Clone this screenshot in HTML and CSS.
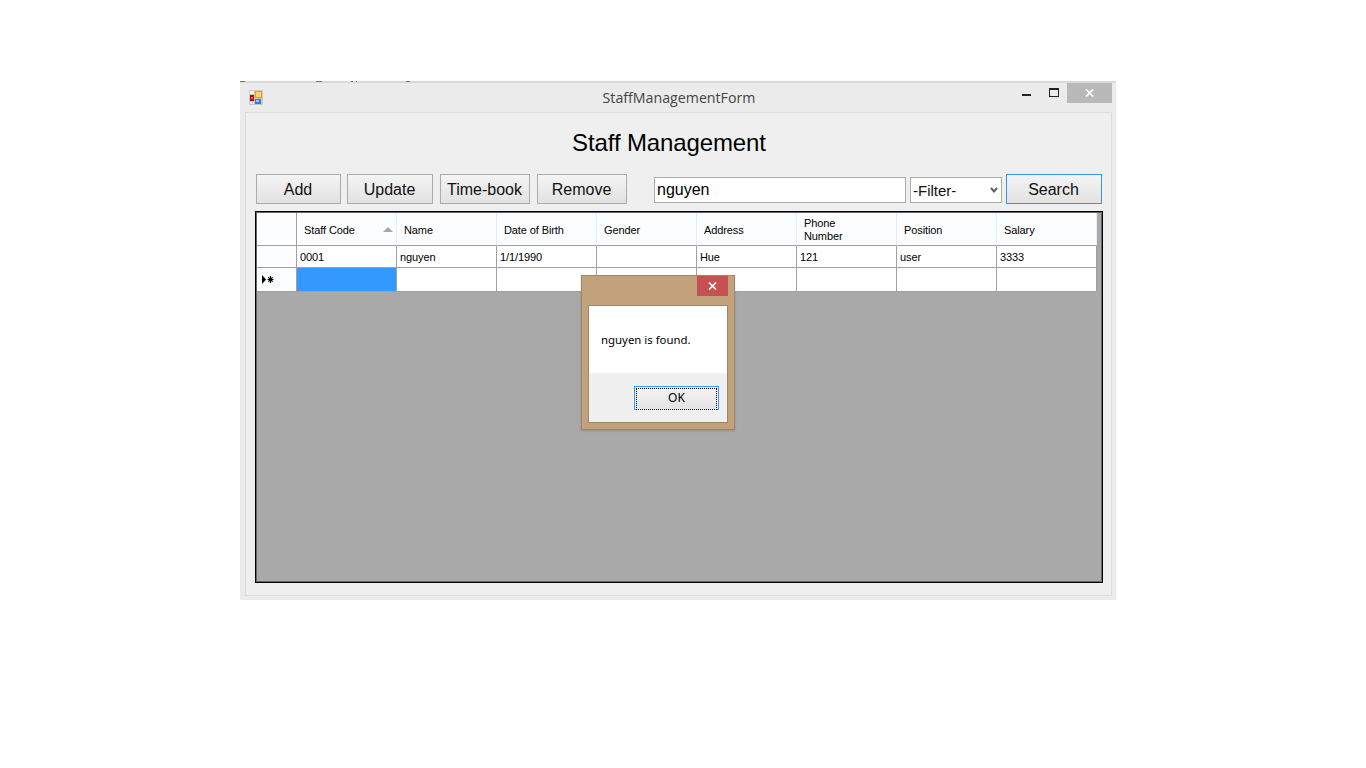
FILE: index.html
```html
<!DOCTYPE html>
<html lang="en">
<head>
  <meta charset="UTF-8">
  <title>StaffManagementForm</title>
  <link rel="stylesheet" href="styles.css">
</head>
<body>
<div class="window">
  <div class="smudges"><i class="s1"></i><i class="s2"></i><i class="s3"></i><i class="s4"></i><i class="s5"></i></div>
  <div class="titlebar">
    <svg class="app-icon" width="14" height="15" viewBox="0 0 14 15">
      <rect x="0" y="0" width="14" height="15" fill="#c9c9c9"/>
      <rect x="1" y="1" width="4" height="3" fill="#f2f2f2"/>
      <rect x="6" y="1" width="7" height="7" fill="#e0a800"/>
      <rect x="7" y="2" width="5" height="5" fill="#ffd75a"/>
      <rect x="1" y="5" width="4" height="6" fill="#b01010"/>
      <rect x="2" y="7" width="2" height="2" fill="#f06060"/>
      <rect x="6" y="9" width="6" height="5" fill="#3c78d8"/>
      <rect x="7" y="10" width="3" height="2" fill="#9cc4f4"/>
      <rect x="1" y="12" width="2" height="2" fill="#f2f2f2"/>
      <rect x="4" y="12" width="1" height="2" fill="#f2f2f2"/>
    </svg>
    <div class="window-title">StaffManagementForm</div>
    <div class="controls">
      <svg class="min-icon" width="9" height="3" viewBox="0 0 9 3"><rect width="9" height="2" y="1" fill="#222"/></svg>
      <svg class="max-icon" width="11" height="9" viewBox="0 0 11 9"><rect x="0.5" y="0.5" width="9" height="8" fill="none" stroke="#222"/><rect x="0" y="0" width="10" height="2" fill="#222"/></svg>
      <div class="close-btn">
        <svg width="9" height="8" viewBox="0 0 9 8"><path d="M1 0.5 L8 7.5 M8 0.5 L1 7.5" stroke="#fff" stroke-width="1.7"/></svg>
      </div>
    </div>
  </div>

  <div class="client">
    <h1 class="heading">Staff Management</h1>

    <div class="toolbar">
      <button class="btn btn-add">Add</button>
      <button class="btn btn-update">Update</button>
      <button class="btn btn-timebook">Time-book</button>
      <button class="btn btn-remove">Remove</button>
      <input class="search-box" type="text" value="nguyen">
      <div class="filter-wrap">
        <select class="filter"><option>-Filter-</option></select>
        <svg class="filter-arrow" width="8" height="6" viewBox="0 0 8 6"><path d="M1 1 L4 4.5 L7 1" fill="none" stroke="#606060" stroke-width="2"/></svg>
      </div>
      <button class="btn btn-search">Search</button>
    </div>

    <div class="grid-view">
      <div class="grid-rows">
        <div class="row head">
          <div class="cell rowhead"></div>
          <div class="cell sorted">Staff Code<span class="sort-arrow"></span></div>
          <div class="cell">Name</div>
          <div class="cell">Date of Birth</div>
          <div class="cell">Gender</div>
          <div class="cell">Address</div>
          <div class="cell">Phone<br>Number</div>
          <div class="cell">Position</div>
          <div class="cell">Salary</div>
        </div>
        <div class="row data">
          <div class="cell rowhead"></div>
          <div class="cell">0001</div>
          <div class="cell">nguyen</div>
          <div class="cell">1/1/1990</div>
          <div class="cell"></div>
          <div class="cell">Hue</div>
          <div class="cell">121</div>
          <div class="cell">user</div>
          <div class="cell">3333</div>
        </div>
        <div class="row data new-row">
          <div class="cell rowhead">
            <svg width="13" height="9" viewBox="0 0 13 9">
              <path d="M0 0 L4 4.5 L0 9 Z" fill="#000"/>
              <path d="M8.5 1 V8 M5.5 4.5 H11.5 M6.3 2.3 L10.7 6.7 M10.7 2.3 L6.3 6.7" stroke="#000" stroke-width="1.2"/>
            </svg>
          </div>
          <div class="cell selected"></div>
          <div class="cell"></div>
          <div class="cell"></div>
          <div class="cell"></div>
          <div class="cell"></div>
          <div class="cell"></div>
          <div class="cell"></div>
          <div class="cell"></div>
        </div>
      </div>
    </div>
  </div>

  <div class="dialog">
    <div class="dialog-top">
      <div class="dialog-close">
        <svg width="9" height="8" viewBox="0 0 9 8"><path d="M1 0.5 L8 7.5 M8 0.5 L1 7.5" stroke="#fff" stroke-width="1.7"/></svg>
      </div>
    </div>
    <div class="dialog-body">
      <div class="dialog-msg">nguyen is found.</div>
      <div class="dialog-foot">
        <button class="ok-btn"><span>OK</span></button>
      </div>
    </div>
  </div>
</div>
</body>
</html>
```

FILE: styles.css
```css
body {
  margin: 0;
  padding: 81px 0 0 240px;
  background-color: #fff;
  font-family: "Liberation Sans", Arial, sans-serif;
}

.window {
  position: relative;
  box-sizing: border-box;
  width: 876px;
  height: 519px;
  padding: 0 4px 4px 5px;
  background-color: #ebebeb;
  border-top: 2px solid #d9d9de;
}

.smudges i {
  position: absolute;
  top: -2px;
  height: 1px;
  background-color: #777;
}
.smudges .s1 { left: 0; width: 5px; }
.smudges .s2 { left: 76px; width: 6px; }
.smudges .s3 { left: 111px; width: 2px; }
.smudges .s4 { left: 116px; width: 1px; }
.smudges .s5 { left: 166px; width: 4px; }

.titlebar {
  display: grid;
  grid-template-columns: 1fr auto 1fr;
  height: 29px;
  margin-left: -5px;
  margin-right: -4px;
}

.app-icon {
  margin: 7px 0 0 9px;
}

.window-title {
  padding: 5px 0 0 2px;
  font-family: "Open Sans", sans-serif;
  font-size: 14.2px;
  line-height: 19px;
  color: #444;
}

.controls {
  display: flex;
  justify-content: flex-end;
  align-items: flex-start;
  padding-right: 4px;
}

.min-icon {
  margin: 10px 18px 0 0;
}

.max-icon {
  margin: 5px 7px 0 0;
}

.close-btn {
  display: flex;
  align-items: center;
  justify-content: center;
  width: 45px;
  height: 20px;
  background-color: #b9b9b9;
}

.client {
  box-sizing: border-box;
  height: 484px;
  padding: 0 8px 0 9px;
  background-color: #efefef;
  border: 1px solid #dcdcdc;
}

.heading {
  margin: 0;
  padding: 16px 20px 0 0;
  height: 45px;
  font-size: 24px;
  font-weight: normal;
  line-height: 27px;
  letter-spacing: -0.12px;
  text-align: center;
  color: #000;
}

.toolbar {
  display: flex;
  align-items: center;
  height: 30px;
}

.btn {
  box-sizing: border-box;
  height: 30px;
  padding: 1px 1px 0 0;
  font-family: "Liberation Sans", Arial, sans-serif;
  font-size: 16px;
  color: #111;
  background: linear-gradient(#f4f4f4, #e2e2e2);
  border: 1px solid #acacac;
}

.btn-add { width: 85px; margin-left: 1px; }
.btn-update { width: 86px; margin-left: 6px; }
.btn-timebook { width: 90px; margin-left: 7px; }
.btn-remove { width: 90px; margin-left: 7px; }

.btn-search {
  width: 96px;
  margin-left: 4px;
  border-color: #3399ee;
}

.search-box {
  box-sizing: border-box;
  width: 252px;
  height: 26px;
  margin: 2px 0 0 27px;
  padding: 0 2px;
  font-family: "Liberation Sans", Arial, sans-serif;
  font-size: 16px;
  color: #000;
  background-color: #fff;
  border: 1px solid #acacac;
  outline: none;
}

.filter-wrap {
  position: relative;
  width: 92px;
  height: 26px;
  margin: 2px 0 0 4px;
}

.filter {
  box-sizing: border-box;
  width: 92px;
  height: 26px;
  padding: 0 0 0 2px;
  font-family: "Liberation Sans", Arial, sans-serif;
  font-size: 15px;
  color: #111;
  background-color: #fff;
  border: 1px solid #acacac;
  border-radius: 0;
  appearance: none;
}

.filter-arrow {
  position: absolute;
  left: 80px;
  top: 10px;
}

.grid-view {
  box-sizing: border-box;
  width: 848px;
  height: 372px;
  margin-top: 7px;
  padding: 1px;
  background-color: #a9a9a9;
  border: 1px solid #000;
  box-shadow: inset 0 0 0 1px #666;
}

.row {
  display: grid;
  grid-template-columns: 40px repeat(8, 100px);
}

.cell {
  box-sizing: border-box;
  display: flex;
  align-items: center;
  padding: 1px 0 0 3px;
  font-size: 11px;
  line-height: 13px;
  letter-spacing: -0.1px;
  color: #000;
  background-color: #fff;
  border-right: 1px solid #a0a0a0;
  border-bottom: 1px solid #a0a0a0;
}

.head {
  height: 33px;
}

.head .cell {
  display: block;
  position: relative;
  padding: 11px 0 0 7px;
  background-color: #fcfdff;
  border-right-color: #e3eefc;
  border-bottom-color: #a0a0a8;
}

.head .cell:has(br) {
  padding-top: 4px;
}

.head .rowhead {
  border-right-color: #a0a0a0;
}

.sort-arrow {
  position: absolute;
  right: 3px;
  top: 14px;
  border-left: 5px solid transparent;
  border-right: 5px solid transparent;
  border-bottom: 5px solid #a8a8a8;
}

.data {
  height: 22px;
}

.new-row {
  height: 24px;
}

.rowhead {
  background-color: #fcfdff;
}

.new-row .rowhead {
  padding: 0 0 0 5px;
}

.selected {
  background-color: #3399ff;
}

.dialog {
  position: absolute;
  left: 341px;
  top: 192px;
  box-sizing: border-box;
  width: 154px;
  height: 155px;
  padding: 0 6px 6px 6px;
  background-color: #c2a27c;
  border: 1px solid #a08566;
  box-shadow: 0 1px 2px rgba(0, 0, 0, 0.15);
}

.dialog-top {
  display: flex;
  justify-content: flex-end;
  height: 29px;
}

.dialog-close {
  display: flex;
  align-items: center;
  justify-content: center;
  width: 31px;
  height: 20px;
  background-color: #c75050;
}

.dialog-body {
  box-sizing: border-box;
  height: 118px;
  background-color: #fff;
  border: 1px solid #a08566;
}

.dialog-msg {
  height: 67px;
  padding: 26px 0 0 12px;
  box-sizing: border-box;
  font-family: "Noto Sans", sans-serif;
  font-size: 11.4px;
  line-height: 16px;
  color: #000;
}

.dialog-foot {
  display: flex;
  justify-content: flex-end;
  box-sizing: border-box;
  height: 49px;
  padding: 13px 8px 0 0;
  background-color: #f0f0f0;
}

.ok-btn {
  box-sizing: border-box;
  width: 85px;
  height: 24px;
  padding: 1px;
  background: #f0f0f0;
  border: 1px solid #3399ff;
}

.ok-btn span {
  display: block;
  height: 20px;
  font-family: "Noto Sans", sans-serif;
  font-size: 12px;
  line-height: 18px;
  color: #000;
  background: linear-gradient(#f2f2f2, #e4e4e4);
  border: 1px dotted #000;
}
```
